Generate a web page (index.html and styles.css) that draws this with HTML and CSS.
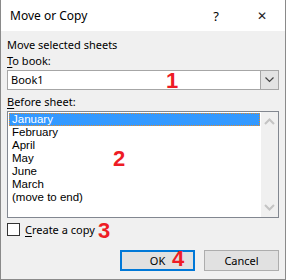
FILE: index.html
```html
<!DOCTYPE html>
<html lang="en">
<head>
    <meta charset="UTF-8">
    <title>Move or Copy</title>
    <link rel="stylesheet" href="styles.css">
</head>
<body>
    <div class="window">
        <div class="titlebar">
            <span class="title">Move or Copy</span>
            <span class="help">?</span>
            <span class="close">&#10005;</span>
        </div>
        <div class="content">
            <div class="label first">Move selected sheets</div>
            <div class="label"><u>T</u>o book:</div>
            <div class="combo">
                <span class="combo-text">Book1</span>
                <span class="combo-btn">
                    <svg width="9" height="6" viewBox="0 0 9 6"><path d="M0.5 0.5 L4.5 4.5 L8.5 0.5" fill="none" stroke="#444" stroke-width="1.2"/></svg>
                </span>
            </div>
            <div class="label"><u>B</u>efore sheet:</div>
            <div class="listbox">
                <ul class="items">
                    <li class="selected">January</li>
                    <li>February</li>
                    <li>April</li>
                    <li>May</li>
                    <li>June</li>
                    <li>March</li>
                    <li>(move to end)</li>
                </ul>
                <div class="scrollbar">
                    <svg width="11" height="7" viewBox="0 0 11 7"><path d="M1 6 L5.5 1.5 L10 6" fill="none" stroke="#c4c4c4" stroke-width="2"/></svg>
                    <svg width="11" height="7" viewBox="0 0 11 7"><path d="M1 1 L5.5 5.5 L10 1" fill="none" stroke="#c4c4c4" stroke-width="2"/></svg>
                </div>
            </div>
            <div class="check-row">
                <span class="checkbox"></span>
                <span class="check-label"><u>C</u>reate a copy</span>
            </div>
            <div class="buttons">
                <button class="btn default">OK</button>
                <button class="btn">Cancel</button>
            </div>
        </div>
        <span class="mark m1">1</span>
        <span class="mark m2">2</span>
        <span class="mark m3">3</span>
        <span class="mark m4">4</span>
    </div>
</body>
</html>
```

FILE: styles.css
```css
body {
    margin: 0;
    font-family: "Noto Sans", "Open Sans", sans-serif;
    font-size: 11px;
    color: #000;
}

.window {
    position: relative;
    width: 286px;
    height: 280px;
    box-sizing: border-box;
    border: 1px solid #8a8a8a;
    border-top: none;
    background: #f0f0f0;
}

.titlebar {
    height: 31px;
    background: #fff;
    display: flex;
    align-items: center;
    padding-left: 9px;
}

.title {
    font-size: 12px;
    flex: 1;
}

.help {
    font-size: 13px;
    width: 46px;
    text-align: center;
}

.close {
    font-size: 12px;
    width: 46px;
    text-align: center;
    color: #222;
}

.content {
    padding: 0 6px 0 6px;
}

.label {
    height: 16px;
    line-height: 16px;
}

.label.first {
    margin-top: 6px;
}

u {
    text-decoration-thickness: 1px;
    text-underline-offset: 2px;
}

.combo {
    margin-top: 1px;
    height: 20px;
    box-sizing: border-box;
    border: 1px solid #a6a6a6;
    background: #fff;
    display: flex;
    align-items: stretch;
}

.combo-text {
    flex: 1;
    padding-left: 3px;
    line-height: 18px;
}

.combo-btn {
    width: 17px;
    background: #e3e3e3;
    border-left: 1px solid #a6a6a6;
    display: flex;
    align-items: center;
    justify-content: center;
}

.combo + .label {
    margin-top: 4px;
}

.listbox {
    margin-top: 1px;
    height: 107px;
    box-sizing: border-box;
    border: 1px solid #828790;
    background: #fff;
    display: flex;
}

.items {
    list-style: none;
    margin: 0;
    padding: 1px 1px 0 1px;
    flex: 1;
    font-family: "Liberation Sans", sans-serif;
    font-size: 11.5px;
}

.items li {
    height: 13px;
    line-height: 13px;
    padding-left: 3px;
}

.items li.selected {
    background: #3399ff;
    color: #fff;
    outline: 1px dotted #e08a2c;
    outline-offset: -1px;
}

.scrollbar {
    width: 17px;
    background: #f0f0f0;
    display: flex;
    flex-direction: column;
    justify-content: space-between;
    align-items: center;
    padding: 6px 0 6px;
    box-sizing: border-box;
}

.check-row {
    margin-top: 5px;
    display: flex;
    align-items: center;
    height: 13px;
}

.checkbox {
    width: 13px;
    height: 13px;
    box-sizing: border-box;
    border: 1px solid #333;
    background: #fff;
}

.check-label {
    margin-left: 5px;
}

.buttons {
    margin-top: 14px;
    display: flex;
    justify-content: flex-end;
    gap: 9px;
}

.btn {
    width: 75px;
    height: 21px;
    box-sizing: border-box;
    border: 1px solid #adadad;
    background: #e1e1e1;
    font-family: inherit;
    font-size: 11px;
    padding: 0;
}

.btn.default {
    border: 2px solid #0078d7;
}

.mark {
    position: absolute;
    color: #ee1c25;
    font-family: "Liberation Sans", sans-serif;
    font-weight: bold;
    font-size: 22px;
    line-height: 1;
}

.m1 { left: 165px; top: 70px; }
.m2 { left: 112px; top: 148px; }
.m3 { left: 97px; top: 220px; }
.m4 { left: 171px; top: 248px; }
```
